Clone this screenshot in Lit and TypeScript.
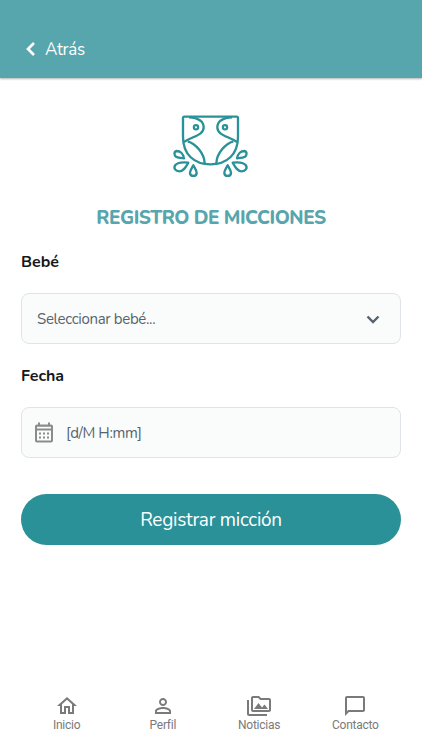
import { LitElement, html, css, svg } from "lit";
import { customElement } from "lit/decorators.js";

const halfDiaper = svg`
  <path d="M72 37C104 39 116 51 116 67C116 91 84 93 57 111"/>
  <path d="M68 109C91 115 118 145 119 175"/>
  <circle cx="93" cy="67" r="6.500" stroke-width="6.500"/>
  <path d="M57 160C55 147 46 138 35 138C26 140 27 151 33 155C39 159 47 159 57 160Z"/>
  <path d="M70 173C55 171 38 173 31 180C24 190 32 199 43 199C56 199 62 187 70 173Z"/>
  <path d="M85 181C80 190 75 197 75 203C75 216 95 216 95 203C95 197 90 190 85 181Z"/>`;

const tabs = [
  { label: "Inicio", icon: svg`<path d="M12 5.69l5 4.5V18h-2v-6H9v6H7v-7.81l5-4.5M12 3L2 12h3v8h6v-6h2v6h6v-8h3L12 3z"/>` },
  { label: "Perfil", icon: svg`<path d="M12 5.9a2.1 2.1 0 1 1 0 4.2 2.1 2.1 0 0 1 0-4.2m0 9c2.970 0 6.100 1.460 6.100 2.100v1.100H5.900V17c0-.64 3.130-2.100 6.100-2.100M12 4C9.790 4 8 5.790 8 8s1.790 4 4 4 4-1.790 4-4-1.790-4-4-4zm0 9c-2.670 0-8 1.340-8 4v3h16v-3c0-2.660-5.330-4-8-4z"/>` },
  { label: "Noticias", icon: svg`<path d="M2 6H0v14c0 1.100.9 2 2 2h18v-2H2V6zm5 9h14l-3.500-4.500-2.500 3.010L11.500 9zM22 4h-8l-2-2H6c-1.100 0-1.990.9-1.990 2L4 16c0 1.100.9 2 2 2h16c1.100 0 2-.9 2-2V6c0-1.100-.9-2-2-2zm0 12H6V4h5.170l2 2H22v10z"/>` },
  { label: "Contacto", icon: svg`<path d="M20 2H4c-1.100 0-2 .9-2 2v18l4-4h14c1.100 0 2-.9 2-2V4c0-1.100-.9-2-2-2zm0 14H5.170L4 17.170V4h16v12z"/>` },
];

@customElement("app-root")
export class AppRoot extends LitElement {
  static styles = css`
    :host {
      display: flex;
      flex-direction: column;
      height: 750px;
      box-sizing: border-box;
      background: #fff;
      font-family: Nunito, Lato, "Noto Sans", sans-serif;
      color: #14181b;
    }
    * { box-sizing: border-box; }
    svg { display: block; flex: none; }
    header {
      height: 78px;
      padding: 20px 0 0 24px;
      background: #57a5ad;
      box-shadow: 0 1px 2px rgba(0, 0, 0, 0.3);
      display: flex;
      align-items: center;
      color: #fff;
    }
    .back { font-size: 17px; letter-spacing: -0.3px; margin-left: 8px; }
    main { flex: 1; padding: 27px 21px 0; display: flex; flex-direction: column; }
    .logo { align-self: center; }
    h1 {
      margin: 20px 0 0;
      height: 26px;
      font-size: 19px;
      letter-spacing: -0.5px;
      line-height: 26px;
      font-weight: 800;
      color: #57a5ad;
      text-align: center;
      white-space: nowrap;
    }
    .label {
      height: 24px;
      line-height: 24px;
      font-size: 16px;
      font-weight: 700;
      margin-bottom: 19px;
    }
    .first { margin-top: 19px; }
    .field {
      height: 51px;
      border: 1px solid #e0e3e7;
      border-radius: 8px;
      background: #fafcfc;
      display: flex;
      align-items: center;
      color: #57636c;
      font-size: 15px;
      letter-spacing: -0.33px;
      margin-bottom: 20px;
    }
    .select { padding: 0 15px; justify-content: space-between; }
    .date { padding-left: 10px; gap: 10px; }
    .text { white-space: nowrap; }
    .fmt { letter-spacing: -0.38px; }
    button {
      height: 51px;
      margin: 16px 0 0;
      border: 0;
      border-radius: 26px;
      background: #2a9198;
      color: #fff;
      font: 400 19px/50px Nunito, Lato, "Noto Sans", sans-serif;
      letter-spacing: -0.26px;
      padding: 0;
    }
    nav { height: 64px; padding: 0 18.500px; display: grid; grid-template-columns: repeat(4, 1fr); }
    .tab {
      display: flex;
      flex-direction: column;
      align-items: center;
      padding-top: 8px;
      color: #7a7a7a;
      font: 400 12px/14px Roboto, sans-serif;
      letter-spacing: -0.25px;
    }
  `;

  render() {
    return html`
      <header>
        <svg width="13" height="16" viewBox="0 0 13 16" fill="none" stroke="#fff" stroke-width="2.700"><path d="M10 2L4 8L10 14"/></svg>
        <span class="back">Atrás</span>
      </header>
      <main>
        <svg class="logo" width="92" height="80" viewBox="0 0 276 240" fill="none" stroke="#2a9198" stroke-width="7" stroke-linejoin="round">
          <path d="M58 35H215Q219 35 219 39V95C219 149 185 178 136.500 178S54 149 54 95V39Q54 35 58 35Z"/>
          <g>${halfDiaper}</g>
          <g transform="translate(273 0) scale(-1 1)">${halfDiaper}</g>
        </svg>
        <h1>REGISTRO DE MICCIONES</h1>
        <div class="label first">Bebé</div>
        <div class="field select">
          <span class="text">Seleccionar bebé...</span>
          <svg width="24" height="24" viewBox="0 0 24 24" fill="none" stroke="#57636c" stroke-width="2.400"><path d="M6.500 9.500L12 15L17.500 9.500"/></svg>
        </div>
        <div class="label">Fecha</div>
        <div class="field date">
          <svg width="24" height="24" viewBox="0 0 24 24" fill="#8b8b8b">
            <path fill-rule="evenodd" d="M6 1.500h2v2h8v-2h2v2h1a2 2 0 0 1 2 2v14a2 2 0 0 1-2 2H5a2 2 0 0 1-2-2v-14a2 2 0 0 1 2-2h1zM5 5.800v1.700h14V5.800zM5 9.500v10h14v-10z"/>
            <path d="M7 11.500h2v2H7zM11 11.500h2v2h-2zM15 11.500h2v2h-2zM7 15.500h2v2H7zM11 15.500h2v2h-2zM15 15.500h2v2h-2z"/>
          </svg>
          <span class="text fmt">[d/M H:mm]</span>
        </div>
        <button>Registrar micción</button>
      </main>
      <nav>
        ${tabs.map((t) => html`<div class="tab">
          <svg width="24" height="24" viewBox="0 0 24 24" fill="#7a7a7a">${t.icon}</svg>
          <span>${t.label}</span>
        </div>`)}
      </nav>
    `;
  }
}
